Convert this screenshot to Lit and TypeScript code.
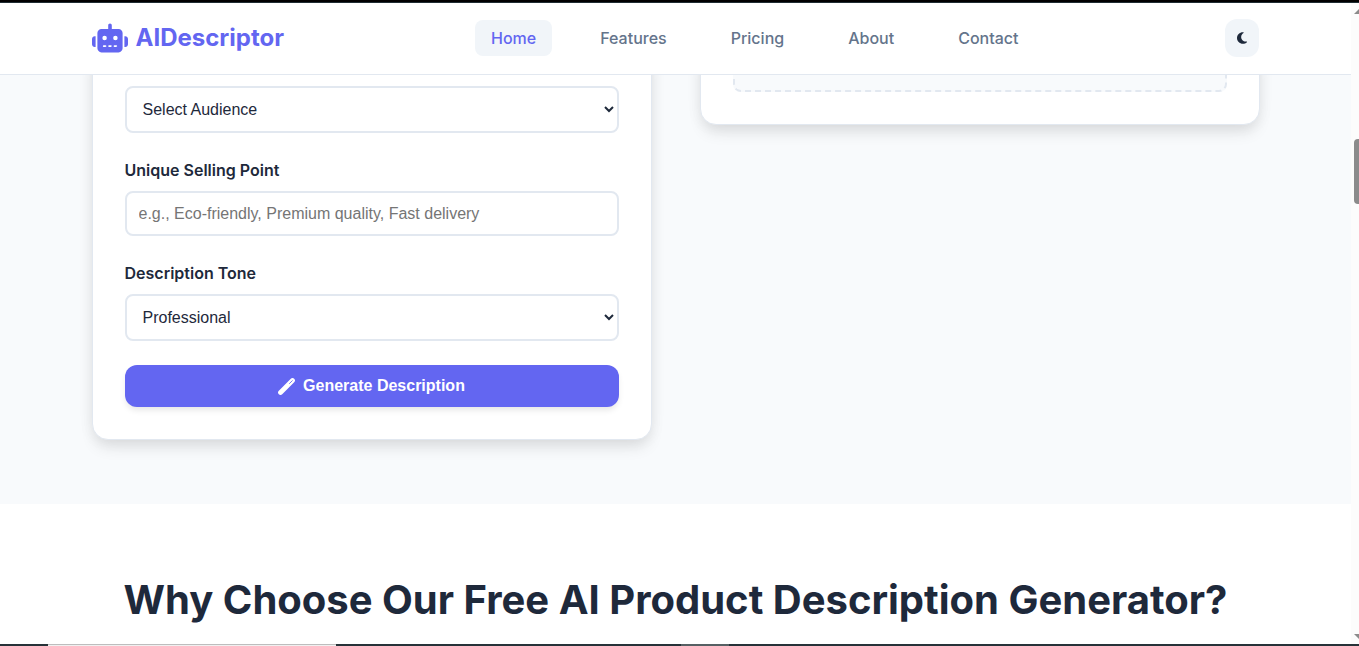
import { LitElement, html, css, svg } from "lit";
import { customElement, state } from "lit/decorators.js";

const robot = svg`<path fill="currentColor" d="M320 0c17.7 0 32 14.3 32 32V96H472c39.8 0 72 32.2 72 72V440c0 39.8-32.2 72-72 72H168c-39.8 0-72-32.2-72-72V168c0-39.8 32.2-72 72-72H288V32c0-17.7 14.3-32 32-32zM208 384c-8.8 0-16 7.2-16 16s7.2 16 16 16h32c8.8 0 16-7.2 16-16s-7.2-16-16-16H208zm96 0c-8.8 0-16 7.2-16 16s7.2 16 16 16h32c8.8 0 16-7.2 16-16s-7.2-16-16-16H304zm96 0c-8.8 0-16 7.2-16 16s7.2 16 16 16h32c8.8 0 16-7.2 16-16s-7.2-16-16-16H400zM264 256a40 40 0 1 0 -80 0 40 40 0 1 0 80 0zm152 40a40 40 0 1 0 0-80 40 40 0 1 0 0 80zM48 224H64V416H48c-26.5 0-48-21.5-48-48V272c0-26.5 21.5-48 48-48zm544 0c26.5 0 48 21.5 48 48v96c0 26.5-21.5 48-48 48H576V224h16z"/>`;
const moon = svg`<path fill="currentColor" d="M223.5 32C100 32 0 132.3 0 256S100 480 223.5 480c60.6 0 115.5-24.2 155.8-63.4c5-4.9 6.3-12.5 3.1-18.7s-10.1-9.7-17-8.5c-9.8 1.7-19.8 2.6-30.1 2.6c-96.9 0-175.5-78.8-175.5-176c0-65.8 36-123.1 89.3-153.3c6.1-3.5 9.2-10.5 7.7-17.3s-7.3-11.9-14.3-12.5c-6.3-.5-12.6-.8-19-.8z"/>`;
const wand = svg`<path fill="none" stroke="currentColor" stroke-width="144" stroke-linecap="round" d="M76 436 436 76"/><path fill="none" stroke="#6366f1" stroke-width="26" stroke-linecap="round" d="M346 166 430 82"/>`;

@customElement("app-root")
export class AppRoot extends LitElement {
  static styles = css`
    :host {
      display: flex;
      flex-direction: column;
      position: relative;
      height: 100vh;
      overflow: hidden;
      background: #fff;
      color: #1e293b;
      font: 16px/26px Inter, sans-serif;
    }
    * {
      box-sizing: border-box;
    }
    .frame-top {
      flex: none;
      height: 3px;
      background: #000;
      border-bottom: 1px solid #1f2d33;
    }
    .viewport {
      flex: 1;
      min-height: 0;
      overflow: hidden;
      padding-right: 8px;
    }
    .container {
      max-width: 1232px;
      margin: 0 auto;
      padding: 0 32px;
    }
    .header {
      position: relative;
      z-index: 2;
      background: #fff;
      border-bottom: 1px solid #e2e8f0;
    }
    .bar {
      display: flex;
      align-items: center;
      justify-content: space-between;
      padding-top: 16px;
      padding-bottom: 17px;
    }
    .logo {
      display: flex;
      align-items: center;
      gap: 8px;
      color: #6366f1;
      font-size: 24px;
      font-weight: 700;
      text-decoration: none;
    }
    .nav {
      display: flex;
      gap: 32px;
    }
    .link {
      padding: 8px 16px;
      border-radius: 8px;
      color: #64748b;
      font-weight: 500;
      line-height: 20px;
      text-decoration: none;
    }
    .link.active {
      background: #f1f5f9;
      color: #6366f1;
    }
    .theme {
      display: flex;
      align-items: center;
      justify-content: center;
      width: 34px;
      height: 38px;
      padding: 0;
      border: 0;
      border-radius: 12px;
      background: #f1f5f9;
      color: #1e293b;
    }
    .tool {
      background: #f8fafc;
      padding-bottom: 64px;
    }
    .columns {
      display: grid;
      grid-template-columns: 1fr 1fr;
      align-items: start;
      gap: 48px;
    }
    .card {
      margin-top: -32px;
      padding: 42px 32px 32px;
      border: 1px solid #e2e8f0;
      border-radius: 16px;
      background: #fff;
      box-shadow: 0 10px 15px -3px rgba(0, 0, 0, 0.1), 0 0 16px rgba(0, 0, 0, 0.06);
    }
    .card.result {
      padding-top: 0;
    }
    .output {
      height: 48px;
      border: 2px dashed #e2e8f0;
      border-top: 0;
      border-radius: 0 0 8px 8px;
      background: #f8fafc;
    }
    .form {
      display: grid;
      gap: 24px;
    }
    .field {
      display: grid;
      gap: 8px;
    }
    .label {
      font-weight: 600;
    }
    .control {
      width: 100%;
      height: 47px;
      padding: 12px;
      border: 2px solid #e2e8f0;
      border-radius: 8px;
      background: #fff;
      color: #1e293b;
      font: 16px "Liberation Sans", Arial, sans-serif;
    }
    input.control {
      height: 45px;
    }
    .control::placeholder {
      color: #757575;
    }
    .generate {
      display: flex;
      align-items: center;
      justify-content: center;
      gap: 8px;
      height: 42px;
      border: 0;
      border-radius: 12px;
      background: #6366f1;
      color: #fff;
      font: 700 16px "Liberation Sans", Arial, sans-serif;
      box-shadow: 0 4px 6px -1px rgba(0, 0, 0, 0.1);
    }
    .why {
      padding-top: 64px;
      padding-bottom: 64px;
      text-align: center;
    }
    .title {
      margin: 0;
      font-size: 40px;
      font-weight: 700;
      line-height: 64px;
      white-space: nowrap;
    }
    .scroll {
      position: absolute;
      z-index: 3;
      top: 3px;
      right: 0;
      bottom: 2px;
      width: 8px;
      overflow: hidden;
      background: #fcfcfc;
      display: flex;
      flex-direction: column;
      align-items: flex-start;
      padding: 6px 0 5px 3px;
      color: #8b8b8b;
    }
    .thumb {
      width: 12px;
      height: 65px;
      margin: 125px 0 auto;
      border-radius: 4px;
      background: #8b8b8b;
    }
    .arrow {
      display: block;
      flex: none;
    }
    .frame-bottom {
      flex: none;
      display: flex;
      height: 2px;
      background: #263238;
    }
    .tab {
      width: 288px;
      margin-left: 48px;
      background: #f0f0f0;
      border-top: 1px solid #bdbdbd;
    }
    .chip {
      width: 48px;
      margin-left: 345px;
      background: #566063;
    }
  `;

  @state() private page = "Home";

  render() {
    return html`
      <div class="frame-top"></div>
      <div class="viewport">
        <header class="header">
          <div class="container bar">
            <a class="logo" href="#home">
              <svg width="36" height="30" viewBox="0 0 640 512" aria-hidden="true">${robot}</svg>
              <span>AIDescriptor</span>
            </a>
            <nav class="nav">
              ${["Home", "Features", "Pricing", "About", "Contact"].map(
                (name) => html`<a
                  class="link ${name === this.page ? "active" : ""}"
                  href="#${name.toLowerCase()}"
                  @click=${() => (this.page = name)}
                  >${name}</a
                >`
              )}
            </nav>
            <button class="theme" type="button" aria-label="Toggle dark mode">
              <svg width="10" height="14" viewBox="0 0 384 512" aria-hidden="true">${moon}</svg>
            </button>
          </div>
        </header>
        <main>
          <section class="tool">
            <div class="container columns">
              <div class="card">
                <form class="form" @submit=${(e: Event) => e.preventDefault()}>
                  <select class="control" aria-label="Target Audience">
                    <option>Select Audience</option>
                  </select>
                  <div class="field">
                    <label class="label" for="usp">Unique Selling Point</label>
                    <input class="control" id="usp" type="text" placeholder="e.g., Eco-friendly, Premium quality, Fast delivery" />
                  </div>
                  <div class="field">
                    <label class="label" for="tone">Description Tone</label>
                    <select class="control" id="tone">
                      <option>Professional</option>
                    </select>
                  </div>
                  <button class="generate" type="submit">
                    <svg width="17" height="17" viewBox="0 0 512 512" aria-hidden="true">${wand}</svg>
                    <span>Generate Description</span>
                  </button>
                </form>
              </div>
              <div class="card result"><div class="output"></div></div>
            </div>
          </section>
          <section class="container why">
            <h2 class="title">Why Choose Our Free AI Product Description Generator?</h2>
          </section>
        </main>
      </div>
      <div class="scroll" aria-hidden="true">
        <svg class="arrow" width="10" height="5" viewBox="0 0 10 5"><path fill="currentColor" d="M0 5 5 0l5 5z" /></svg>
        <div class="thumb"></div>
        <svg class="arrow" width="10" height="5" viewBox="0 0 10 5"><path fill="currentColor" d="M0 0h10L5 5z" /></svg>
      </div>
      <div class="frame-bottom"><div class="tab"></div><div class="chip"></div></div>
    `;
  }
}
